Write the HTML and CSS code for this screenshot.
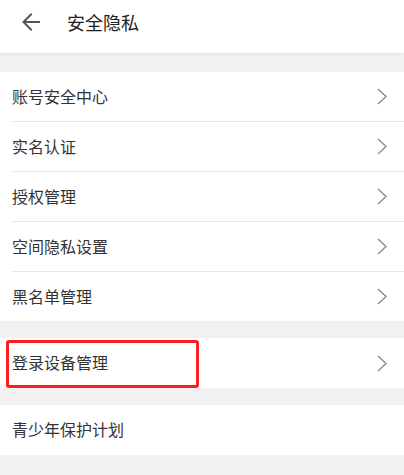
FILE: index.html
```html
<!DOCTYPE html>
<html lang="zh-CN">
<head>
<meta charset="utf-8">
<link rel="stylesheet" href="styles.css">
</head>
<body>
<header class="topbar">
  <svg class="back" width="20" height="20" viewBox="0 0 20 20"><path d="M18 10H3M10 2.5L2.5 10L10 17.5" fill="none" stroke="#555" stroke-width="2" stroke-linecap="square"/></svg>
  <h1 class="title">安全隐私</h1>
</header>
<main class="page">
  <section class="group">
    <div class="row"><span>账号安全中心</span><svg class="chev" width="10" height="17" viewBox="0 0 10 17"><path d="M1 1l8 7.5L1 16" fill="none" stroke="#888" stroke-width="1.3"/></svg></div>
    <div class="row"><span>实名认证</span><svg class="chev" width="10" height="17" viewBox="0 0 10 17"><path d="M1 1l8 7.5L1 16" fill="none" stroke="#888" stroke-width="1.3"/></svg></div>
    <div class="row"><span>授权管理</span><svg class="chev" width="10" height="17" viewBox="0 0 10 17"><path d="M1 1l8 7.5L1 16" fill="none" stroke="#888" stroke-width="1.3"/></svg></div>
    <div class="row"><span>空间隐私设置</span><svg class="chev" width="10" height="17" viewBox="0 0 10 17"><path d="M1 1l8 7.5L1 16" fill="none" stroke="#888" stroke-width="1.3"/></svg></div>
    <div class="row"><span>黑名单管理</span><svg class="chev" width="10" height="17" viewBox="0 0 10 17"><path d="M1 1l8 7.5L1 16" fill="none" stroke="#888" stroke-width="1.3"/></svg></div>
  </section>
  <section class="group">
    <div class="row tall"><span>登录设备管理</span><svg class="chev" width="10" height="17" viewBox="0 0 10 17"><path d="M1 1l8 7.5L1 16" fill="none" stroke="#888" stroke-width="1.3"/></svg><div class="highlight"></div></div>
  </section>
  <section class="group">
    <div class="row tall"><span>青少年保护计划</span></div>
  </section>
</main>
</body>
</html>
```
FILE: styles.css
```css
html, body {
  margin: 0;
  padding: 0;
  background: #f1f1f1;
  font-family: "Noto Sans CJK SC", "Noto Sans", sans-serif;
}
.topbar {
  height: 53px;
  background: #fff;
  display: flex;
  align-items: center;
  box-shadow: 0 1px 4px rgba(0,0,0,0.07);
  position: relative;
}
.back {
  margin-left: 21px;
  margin-top: -9px;
}
.title {
  margin: 0 0 0 26px;
  margin-top: -9px;
  font-size: 18px;
  font-weight: 400;
  color: #222;
}
.page {
  padding-top: 19px;
  display: flex;
  flex-direction: column;
  gap: 17px;
}
.group {
  background: #fff;
  padding-left: 12px;
}
.row {
  height: 49px;
  display: flex;
  align-items: center;
  justify-content: space-between;
  padding-right: 17px;
  font-size: 16px;
  color: #333;
  border-top: 1px solid #e8e8e8;
  position: relative;
}
.row:first-child {
  border-top: none;
}
.row.tall {
  height: 50px;
}
.row span {
  margin-top: -2px;
}
.highlight {
  position: absolute;
  left: -6px;
  top: 2px;
  width: 193px;
  height: 48px;
  box-sizing: border-box;
  border: 3px solid #fb1f1f;
  border-radius: 3px;
}
```
